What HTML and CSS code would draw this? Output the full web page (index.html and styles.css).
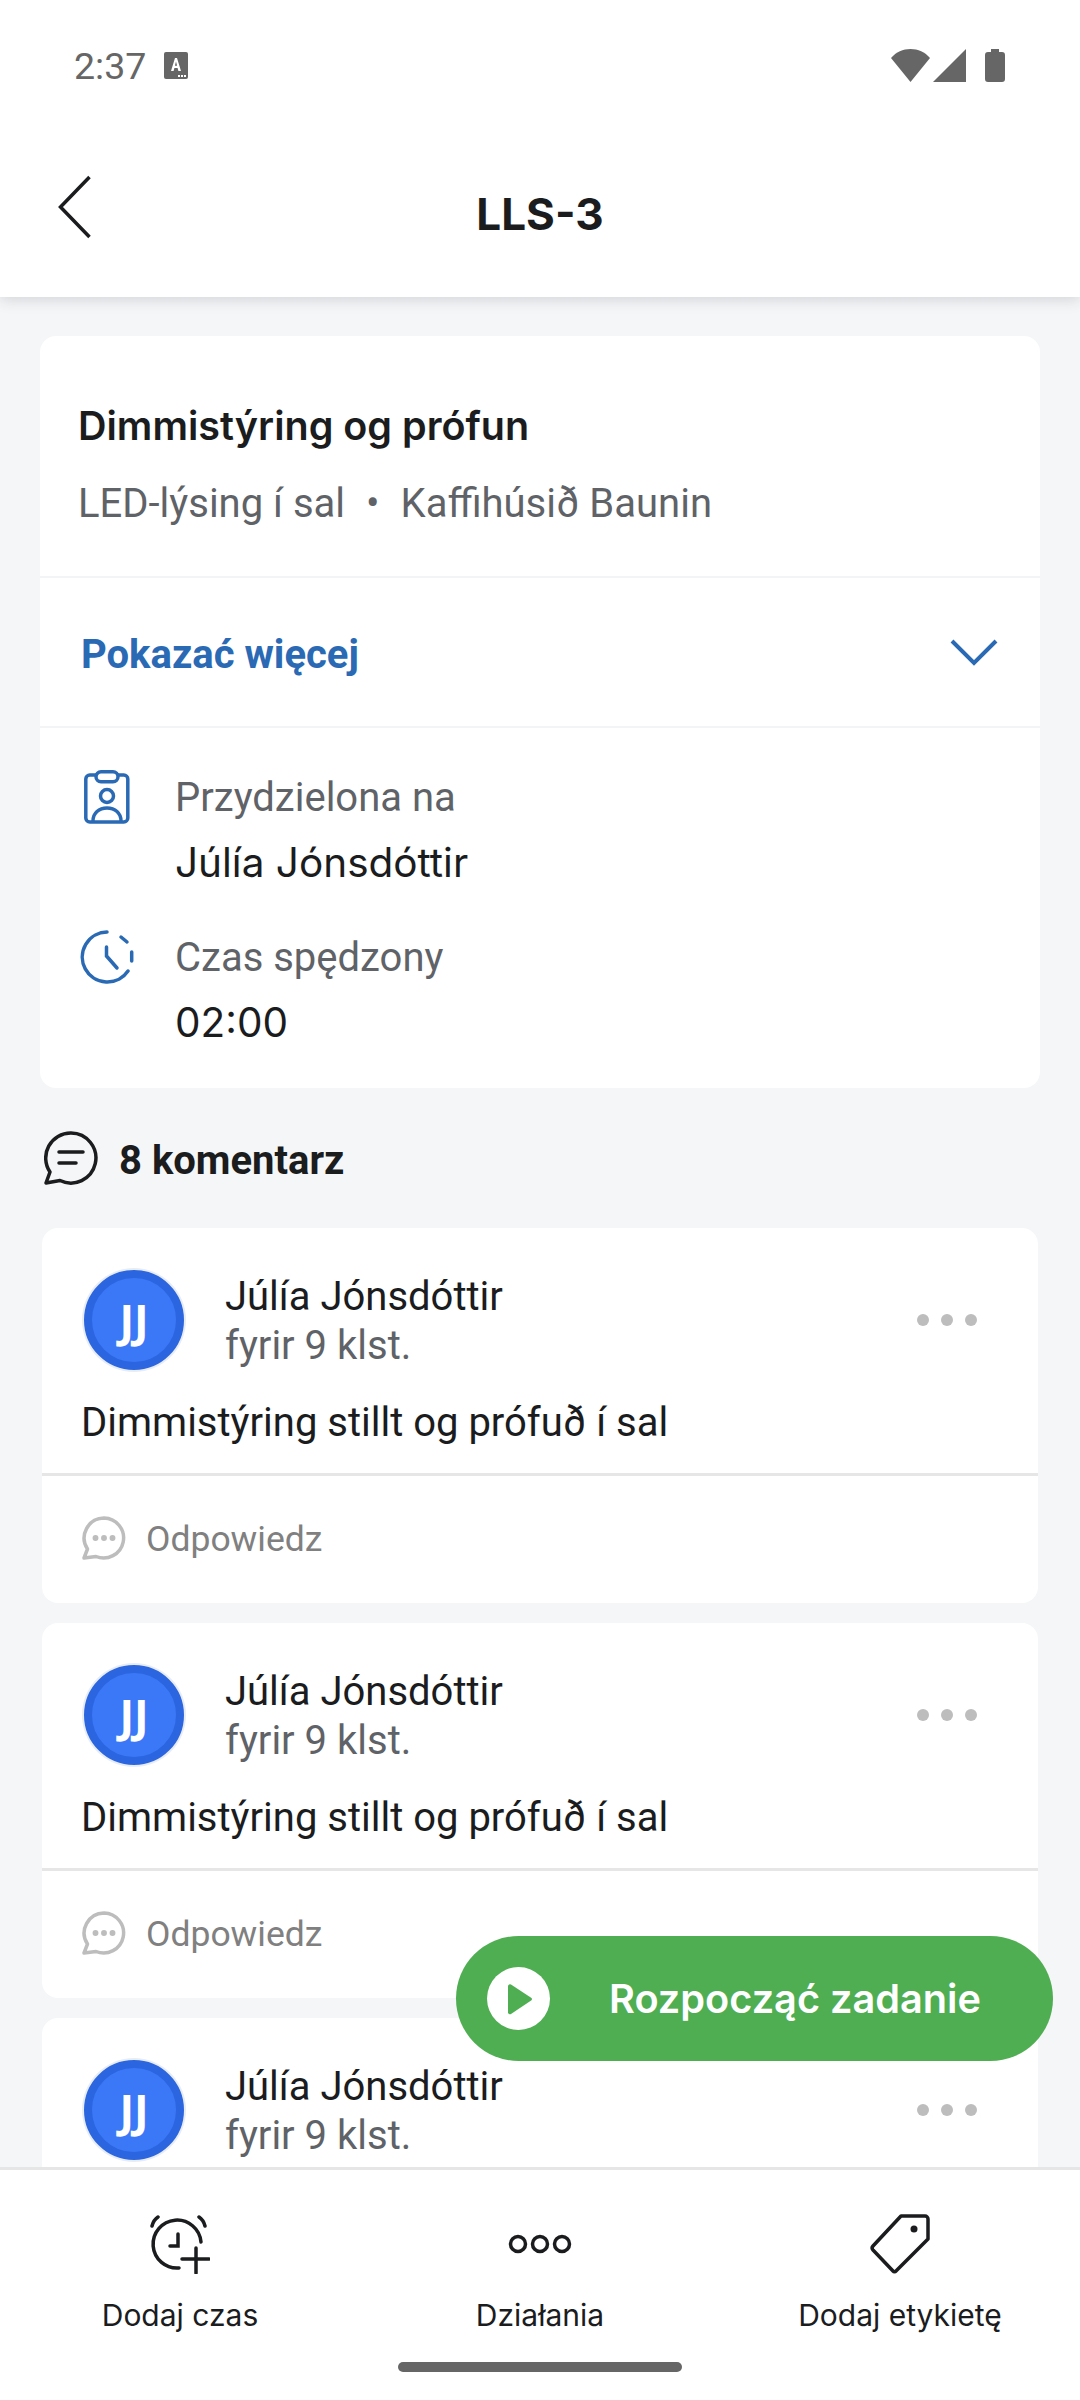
FILE: index.html
```html
<!DOCTYPE html>
<html lang="pl">
<head>
<meta charset="utf-8">
<title>LLS-3</title>
<link rel="stylesheet" href="styles.css">
</head>
<body>
<div class="phone">
  <div class="top">
    <div class="status">
      <div class="status-left">
        <span class="clock">2:37</span>
        <svg class="a-icon" width="24" height="27" viewBox="0 0 24 27"><rect width="24" height="27" rx="2" fill="#666"/><path d="M7 19 11 6h2l4 13h-2.600l-.8-3H10.400l-.8 3zM10.900 13.800h2.200L12 9.500z" fill="#fff" fill-rule="evenodd"/><path d="M14 23h2v2h-2zM17 23h2v2h-2zM20 23h2v2h-2z" fill="#fff"/></svg>
      </div>
      <div class="status-right">
        <svg width="39" height="33" viewBox="0 0 39 33"><path d="M0 9C5 3 12 0 19.500 0S34 3 39 9L19.500 33z" fill="#666"/></svg>
        <svg class="sig" width="33" height="33" viewBox="0 0 33 33"><path d="M33 0v33H0z" fill="#666"/></svg>
        <svg class="bat" width="20" height="33" viewBox="0 0 20 33"><path d="M6 0h8v3h3a3 3 0 0 1 3 3v24a3 3 0 0 1-3 3H3a3 3 0 0 1-3-3V6a3 3 0 0 1 3-3h3z" fill="#666"/></svg>
      </div>
    </div>
    <header class="bar">
      <svg class="back" width="36" height="64" viewBox="0 0 36 64"><path d="M32.500 2 3.500 32l29 30" fill="none" stroke="#1b1c1e" stroke-width="3.500"/></svg>
      <h1 class="bar-title">LLS-3</h1>
    </header>
  </div>

  <main class="main">
    <section class="task">
      <div class="task-head">
        <h2 class="task-title">Dimmistýring og prófun</h2>
        <p class="task-sub"><span>LED-lýsing í sal</span><span class="sep">•</span><span>Kaffihúsið Baunin</span></p>
      </div>
      <div class="more">
        <span class="more-label">Pokazać więcej</span>
        <svg width="48" height="28" viewBox="0 0 48 28"><path d="M2 3l22 22L46 3" fill="none" stroke="#2a6ab5" stroke-width="4"/></svg>
      </div>
      <div class="facts">
        <div class="fact">
          <div class="fact-icon">
            <svg width="46" height="54" viewBox="0 0 46 54" fill="none" stroke="#2a6ab5" stroke-width="3.500"><rect x="1.800" y="5" width="42" height="47" rx="4"/><rect x="12" y="1.800" width="22" height="10" rx="5" fill="#fff"/><circle cx="23" cy="26" r="6.500"/><path d="M9 51c0-8 6-13 14-13s14 5 14 13"/></svg>
          </div>
          <div class="fact-text">
            <span class="fact-label">Przydzielona na</span>
            <span class="fact-value">Júlía Jónsdóttir</span>
          </div>
        </div>
        <div class="fact">
          <div class="fact-icon">
            <svg width="54" height="54" viewBox="0 0 54 54" fill="none" stroke="#2a6ab5" stroke-width="3.500" stroke-linecap="round"><path d="M27 2A25 25 0 1 0 48 41"/><path d="M41 7l6 5M51.700 22v9"/><path d="M26.500 17v9L37 38"/></svg>
          </div>
          <div class="fact-text">
            <span class="fact-label">Czas spędzony</span>
            <span class="fact-value">02:00</span>
          </div>
        </div>
      </div>
    </section>

    <div class="count">
      <svg width="54" height="54" viewBox="0 0 54 54" fill="none" stroke="#1b1c1e" stroke-width="3.500" stroke-linecap="round" stroke-linejoin="round"><path d="M27 2a25 25 0 1 1-11 47.500L2 52l4-11A25 25 0 0 1 27 2z"/><path d="M15 21h24M15 32h17"/></svg>
      <span class="count-label">8 komentarz</span>
    </div>

    <article class="comment">
      <div class="comment-head">
        <div class="avatar"><span>JJ</span></div>
        <div class="who"><span class="name">Júlía Jónsdóttir</span><span class="ago">fyrir 9 klst.</span></div>
        <div class="dots"><i></i><i></i><i></i></div>
      </div>
      <p class="body">Dimmistýring stillt og prófuð í sal</p>
      <div class="reply">
        <svg width="44" height="44" viewBox="0 0 44 44" fill="none" stroke="#bdbdbd" stroke-width="3.500" stroke-linejoin="round"><path d="M22 2a20 20 0 1 1-8 38.500L2 42l3.500-9A20 20 0 0 1 22 2z"/><circle cx="13.500" cy="22" r="1.200" fill="#bdbdbd"/><circle cx="22" cy="22" r="1.200" fill="#bdbdbd"/><circle cx="30.500" cy="22" r="1.200" fill="#bdbdbd"/></svg>
        <span class="reply-label">Odpowiedz</span>
      </div>
    </article>

    <article class="comment">
      <div class="comment-head">
        <div class="avatar"><span>JJ</span></div>
        <div class="who"><span class="name">Júlía Jónsdóttir</span><span class="ago">fyrir 9 klst.</span></div>
        <div class="dots"><i></i><i></i><i></i></div>
      </div>
      <p class="body">Dimmistýring stillt og prófuð í sal</p>
      <div class="reply">
        <svg width="44" height="44" viewBox="0 0 44 44" fill="none" stroke="#bdbdbd" stroke-width="3.500" stroke-linejoin="round"><path d="M22 2a20 20 0 1 1-8 38.500L2 42l3.500-9A20 20 0 0 1 22 2z"/><circle cx="13.500" cy="22" r="1.200" fill="#bdbdbd"/><circle cx="22" cy="22" r="1.200" fill="#bdbdbd"/><circle cx="30.500" cy="22" r="1.200" fill="#bdbdbd"/></svg>
        <span class="reply-label">Odpowiedz</span>
      </div>
    </article>

    <article class="comment">
      <div class="comment-head">
        <div class="avatar"><span>JJ</span></div>
        <div class="who"><span class="name">Júlía Jónsdóttir</span><span class="ago">fyrir 9 klst.</span></div>
        <div class="dots"><i></i><i></i><i></i></div>
      </div>
    </article>
  </main>

  <button class="fab">
    <span class="fab-icon"><svg width="26" height="34" viewBox="0 0 26 34"><path d="M3 2.500 23.500 16a1.500 1.500 0 0 1 0 2.200L3 32a2 2 0 0 1-3-1.500V4a2 2 0 0 1 3-1.500z" fill="#4fae52"/></svg></span>
    <span class="fab-label">Rozpocząć zadanie</span>
  </button>

  <nav class="tabs">
    <div class="tab">
      <svg width="60" height="60" viewBox="0 0 60 60" fill="none" stroke="#1b1c1e" stroke-width="3.500" stroke-linecap="round"><path d="M29 54A24 24 0 1 1 51 28"/><path d="M28 20v12h-8M2 12C3 8 5 5 8 3M55 12C54 8 52 5 49 3M46 34v25M32 45h27"/></svg>
      <span class="tab-label">Dodaj czas</span>
    </div>
    <div class="tab">
      <svg width="64" height="60" viewBox="0 0 64 60" fill="none" stroke="#1b1c1e" stroke-width="3.500"><circle cx="10" cy="30" r="7.500"/><circle cx="32" cy="30" r="7.500"/><circle cx="54" cy="30" r="7.500"/></svg>
      <span class="tab-label">Działania</span>
    </div>
    <div class="tab">
      <svg width="60" height="60" viewBox="0 0 60 60" fill="none" stroke="#1b1c1e" stroke-width="3.500" stroke-linejoin="round"><path d="M31 2h24a3 3 0 0 1 3 3v20L26 57a2 2 0 0 1-3 0L3 36a3 3 0 0 1 0-4z"/><circle cx="44" cy="15" r="3.500" fill="#1b1c1e" stroke="none"/></svg>
      <span class="tab-label">Dodaj etykietę</span>
    </div>
  </nav>
  <div class="home"><span class="home-bar"></span></div>
</div>
</body>
</html>
```
FILE: styles.css
```css
* { box-sizing: border-box; }
html, body { margin: 0; padding: 0; }
body { font-family: Roboto, Inter, sans-serif; background: #fff; color: #1b1c1e; }
.phone { position: relative; width: 1080px; height: 2400px; display: flex; flex-direction: column; overflow: hidden; background: #f5f6f8; }

.top { background: #fff; height: 297px; flex: none; box-shadow: 0 2px 14px rgba(40, 44, 52, .18); position: relative; z-index: 1; }
.status { height: 130px; padding: 49px 75px 0 74px; display: flex; justify-content: space-between; align-items: flex-start; }
.status-left { display: flex; align-items: center; gap: 18px; height: 33px; }
.clock { font: 400 37.500px/35px Roboto, sans-serif; color: #666; padding-top: 2px; }
.status-right { display: flex; align-items: flex-start; }
.sig { margin-left: 3px; }
.bat { margin-left: 19px; }
.bar { height: 167px; position: relative; display: flex; align-items: center; justify-content: center; }
.back { position: absolute; left: 57px; top: 45px; }
.bar-title { margin: 0; font: 700 44px/1 Inter, sans-serif; }

.main { flex: 1; min-height: 0; overflow: hidden; padding: 39px 40px 0; }
.task { background: #fff; border-radius: 16px; }
.task-head { height: 242px; padding: 65px 38px 0; border-bottom: 2px solid #f3f4f5; }
.task-title { margin: 0; font: 600 39.500px/50px Inter, sans-serif; }
.task-sub { margin: 28px 0 0; font-size: 40px; line-height: 50px; color: #5f6368; display: flex; }
.sep { margin: 0 21px; }
.more { height: 150px; padding: 0 42px 0 41px; border-bottom: 2px solid #f3f4f5; display: flex; align-items: center; justify-content: space-between; }
.more-label { font: 700 40px/1 Roboto, sans-serif; color: #2a6ab5; margin-top: 5px; }
.facts { height: 360px; padding: 42px 0 0 40px; }
.fact { display: flex; height: 160px; }
.fact-icon { width: 54px; display: flex; justify-content: center; align-items: flex-start; margin-right: 41px; }
.fact-text { display: flex; flex-direction: column; margin-top: -4px; }
.fact-label { font-size: 40px; line-height: 64px; color: #5f6368; }
.fact-value { font: 400 40.500px/65px Inter, sans-serif; }

.count { height: 140px; padding-left: 4px; display: flex; align-items: center; gap: 21px; }
.count-label { font: 700 40px/1 Roboto, sans-serif; margin-top: 5px; }

.comment { margin: 0 2px 20px; background: #fff; border-radius: 16px; height: 375px; }
.comment-head { height: 160px; padding: 42px 61px 0 42px; display: flex; align-items: flex-start; }
.avatar { flex: none; width: 100px; height: 100px; border-radius: 50%; background: #3b78f7; border: 8px solid #2b66e0; box-shadow: 0 0 0 2px #e8ecf4; display: flex; align-items: center; justify-content: center; }
.avatar span { font: 700 44px/1 "Open Sans", sans-serif; color: #fff; }
.who { margin: 2px 0 0 41px; flex: 1; display: flex; flex-direction: column; }
.name { font-size: 40px; line-height: 49px; }
.ago { font-size: 40px; line-height: 49px; color: #5f6368; }
.dots { display: flex; gap: 12px; margin-top: 44px; }
.dots i { width: 12px; height: 12px; border-radius: 50%; background: #bdbdbd; }
.body { margin: 0; height: 88px; padding: 10px 39px 0; font-size: 40px; line-height: 50px; border-bottom: 3px solid #e6e6e6; }
.reply { height: 127px; padding: 0 40px 3px; display: flex; align-items: center; gap: 20px; }
.reply-label { font-size: 35.500px; color: #808080; margin-top: 2px; }

.fab { position: absolute; left: 456px; top: 1936px; width: 597px; height: 125px; border: 0; border-radius: 63px; background: #4fae52; padding: 0 0 0 31px; display: flex; align-items: center; z-index: 2; }
.fab-icon { width: 63px; height: 63px; border-radius: 50%; background: #fff; display: flex; align-items: center; justify-content: center; padding-left: 5px; }
.fab-label { margin: 2px 0 0 59px; font: 600 39.700px/1 Inter, sans-serif; color: #fff; }

.tabs { flex: none; height: 182px; background: #fff; border-top: 3px solid #e6e6e6; display: grid; grid-template-columns: 360px 360px 360px; padding-top: 44px; z-index: 1; }
.tab { display: flex; flex-direction: column; align-items: center; }
.tab-label { margin-top: 23px; font: 400 30px/36px Inter, sans-serif; }
.home { flex: none; height: 51px; background: #fff; display: flex; justify-content: center; z-index: 1; }
.home-bar { width: 284px; height: 10px; margin-top: 13px; border-radius: 5px; background: #666; }
```
